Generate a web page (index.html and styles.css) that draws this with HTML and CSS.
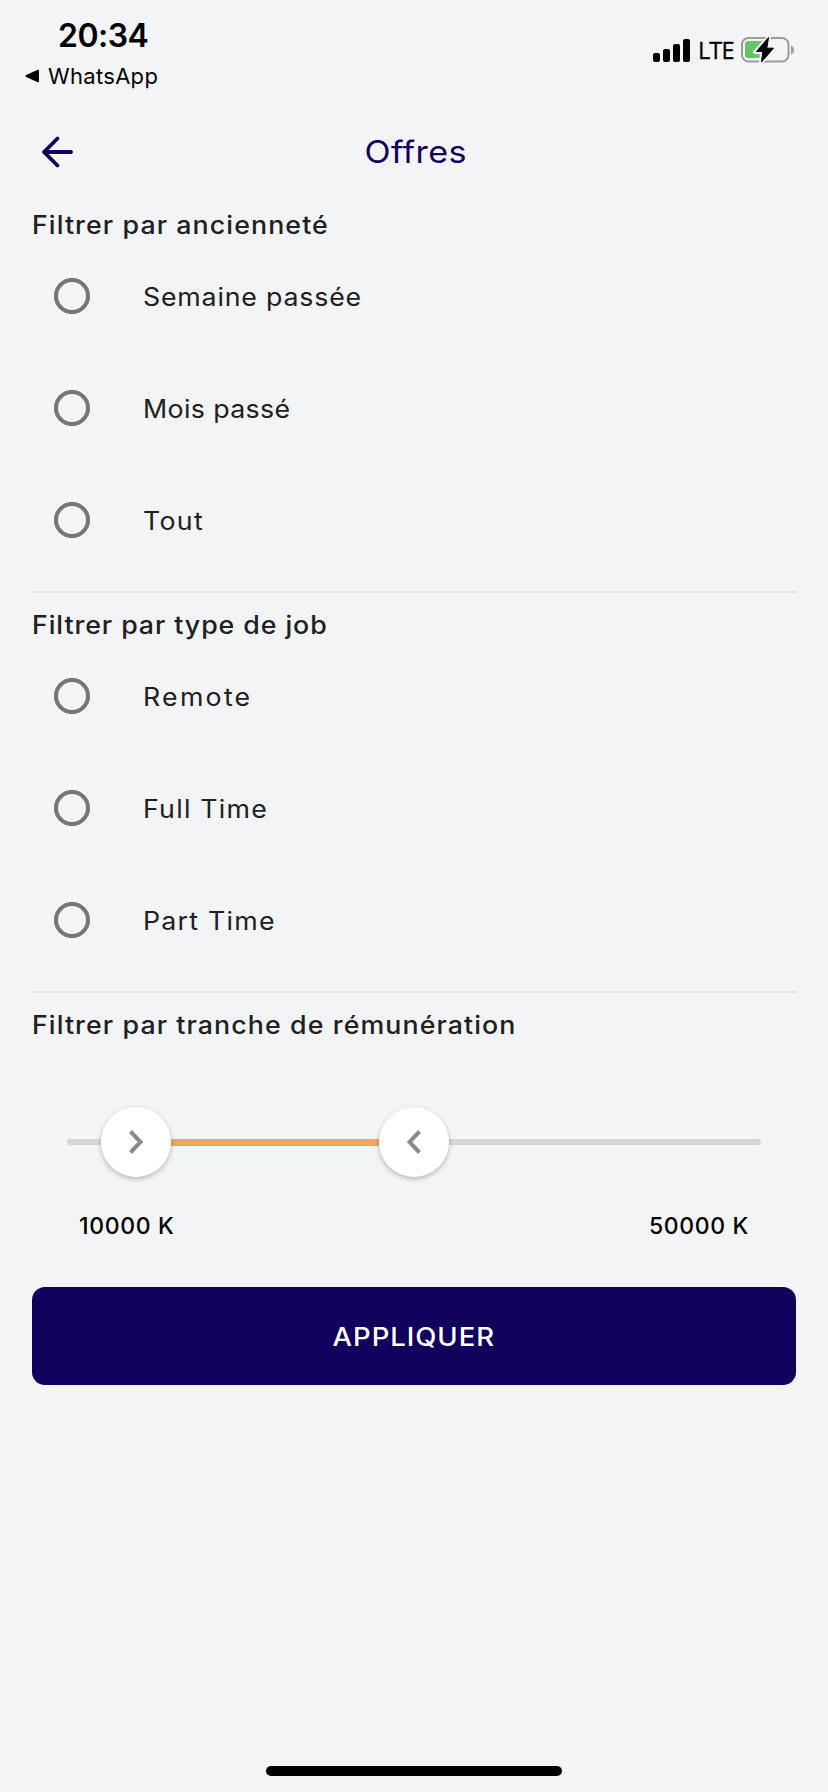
FILE: index.html
```html
<!DOCTYPE html>
<html lang="fr">
<head>
<meta charset="utf-8">
<title>Offres</title>
<link rel="stylesheet" href="styles.css">
</head>
<body>
<div class="screen">
  <div class="status">
    <div class="status-left">
      <div class="time">20:34</div>
      <div class="return">
        <svg width="15" height="14" viewBox="0 0 15 14"><path d="M1.2 6 12.8.8Q14 .5 14 1.8V12.2Q14 13.5 12.8 13.2L1.2 8Q-.4 7 1.2 6Z"/></svg>
        <span>WhatsApp</span>
      </div>
    </div>
    <div class="status-right">
      <svg class="signal" width="38" height="24" viewBox="0 0 38 24"><rect y="14" width="7" height="9" rx="2"/><rect x="10" y="10" width="7" height="13" rx="2"/><rect x="20" y="5" width="7" height="18" rx="2"/><rect x="30" width="7" height="23" rx="2"/></svg>
      <span class="network">LTE</span>
      <svg width="54" height="28" viewBox="0 0 54 28">
        <rect x="1" y="2" width="46.5" height="23.5" rx="6.5" fill="none" stroke="#9b9b9e" stroke-width="2"/>
        <path d="M50 9.5Q53 11 53 14T50 18.500Z" fill="#9b9b9e"/>
        <path d="M7 5H24V22H7Q4 22 4 19V8Q4 5 7 5Z" fill="#65c466"/>
        <path d="M28 1 14 16H21L20 26.500 33.500 12H26Z" fill="#000" stroke="#f3f4f6" stroke-width="4" stroke-linejoin="round"/>
        <path d="M27.500 1.500 15.500 15.500H21.800L20.500 26 32.500 12.200H25.800Z" fill="#000" stroke="#000" stroke-width="1" stroke-linejoin="round"/>
      </svg>
    </div>
  </div>

  <header class="header">
    <svg class="back" width="34" height="34" viewBox="0 0 34 34"><path d="M30 17H3M16.500 3.500 3 17 16.500 30.500"/></svg>
    <h1 class="title">Offres</h1>
  </header>

  <main class="filters">
    <section class="group">
      <h2 class="heading">Filtrer par ancienneté</h2>
      <label class="option"><span class="radio"></span><span class="label">Semaine passée</span></label>
      <label class="option"><span class="radio"></span><span class="label snug">Mois passé</span></label>
      <label class="option"><span class="radio"></span><span class="label wide">Tout</span></label>
      <div class="divider"></div>
    </section>
    <section class="group">
      <h2 class="heading tight">Filtrer par type de job</h2>
      <label class="option"><span class="radio"></span><span class="label wider">Remote</span></label>
      <label class="option"><span class="radio"></span><span class="label loose">Full Time</span></label>
      <label class="option"><span class="radio"></span><span class="label loose">Part Time</span></label>
      <div class="divider"></div>
    </section>
    <section class="salary">
      <h2 class="heading">Filtrer par tranche de rémunération</h2>
      <div class="slider">
        <span class="rail start"></span>
        <span class="thumb"><svg width="16" height="24" viewBox="0 0 16 24"><path d="M2.500 1.500 12.500 12 2.500 22.500"/></svg></span>
        <span class="range"></span>
        <span class="thumb"><svg width="16" height="24" viewBox="0 0 16 24"><path d="M13.500 1.500 3.500 12 13.500 22.500"/></svg></span>
        <span class="rail end"></span>
      </div>
      <div class="bounds"><span>10000 K</span><span>50000 K</span></div>
    </section>
    <button class="apply"><span class="apply-text">APPLIQUER</span></button>
  </main>
  <div class="home"></div>
</div>
</body>
</html>
```
FILE: styles.css
```css
* { box-sizing: border-box; }
body { margin: 0; background: #f3f4f6; color: #202022; font-family: Inter, "Liberation Sans", sans-serif; }
svg { display: block; flex: none; }
h1, h2 { margin: 0; }
.screen { width: 828px; height: 1792px; display: flex; flex-direction: column; }

.status { height: 104px; display: flex; justify-content: space-between; color: #000; }
.status-left { padding: 17px 0 0 25px; display: flex; flex-direction: column; gap: 7px; }
.time { padding-left: 33px; font-size: 32px; font-weight: 600; line-height: 38px; letter-spacing: -0.5px; }
.return { display: flex; align-items: center; gap: 8px; font-size: 22px; line-height: 28px; letter-spacing: 0.3px; }
.status-right { display: flex; align-items: center; height: 28px; margin: 36px 33px 0 0; }
.signal { margin: 1px 7px 0 0; }
.network { width: 43px; font-family: "Open Sans", sans-serif; font-size: 23.5px; line-height: 28px; letter-spacing: -0.9px; -webkit-text-stroke: 0.3px #000; }

.header { height: 96px; padding: 0 41px; display: grid; grid-template-columns: 34px 1fr 34px; align-items: center; }
.back { fill: none; stroke: #11005c; stroke-width: 3.8; stroke-linecap: round; stroke-linejoin: round; }
.title { padding-left: 3px; text-align: center; color: #11005c; font-size: 31px; font-weight: 400; line-height: 40px; letter-spacing: 0.32px; transform: scaleX(1.1); }

.filters { padding: 0 32px; display: flex; flex-direction: column; }
.group { height: 400px; }
/* Headings and labels are drawn slightly extended. */
.heading { height: 40px; padding-top: 10px; font-size: 25px; font-weight: 500; line-height: 30px; letter-spacing: 1.02px; white-space: nowrap; transform: scaleX(1.07); transform-origin: left; }
.tight { letter-spacing: 0.86px; }
.option { height: 112px; padding-left: 22px; display: flex; align-items: center; gap: 53px; }
.radio { width: 36px; height: 36px; border: 4px solid #737476; border-radius: 50%; }
.label { padding-top: 2px; font-size: 25px; line-height: 30px; letter-spacing: 0.75px; transform: scaleX(1.07); transform-origin: left; }
.snug { letter-spacing: 0.35px; }
.wide { letter-spacing: 1.2px; }
.wider { letter-spacing: 2.1px; }
.loose { letter-spacing: 1.15px; }
.divider { height: 2px; margin-top: 15px; background: #e1e2e5; }

.slider { height: 70px; margin: 67px 35px 0; display: flex; align-items: center; }
.rail { height: 6px; background: #d4d5d7; }
.start { width: 34px; border-radius: 3px 0 0 3px; }
.end { flex: 1; border-radius: 0 3px 3px 0; }
.range { width: 208px; height: 7px; background: #efa75d; }
.thumb { position: relative; flex: none; width: 70px; height: 70px; border-radius: 50%; background: #fff; box-shadow: 0 2px 5px rgba(0, 0, 0, 0.26); display: flex; align-items: center; justify-content: center; }
.thumb path { fill: none; stroke: #8b8b8b; stroke-width: 4; }
.bounds { display: flex; justify-content: space-between; margin-top: 35px; padding: 0 47px 0 47px; color: #000; font-size: 23px; font-weight: 500; line-height: 28px; letter-spacing: 0.65px; }
.apply { height: 98px; margin-top: 47px; padding: 1px 0 0; border: 0; border-radius: 13px; background: #11005c; color: #fff; font-family: inherit; font-size: 25px; font-weight: 500; letter-spacing: 0.87px; }
.apply-text { display: inline-block; transform: scaleX(1.1); }
.home { width: 296px; height: 10px; margin: auto auto 16px; border-radius: 5px; background: #000; }
```
